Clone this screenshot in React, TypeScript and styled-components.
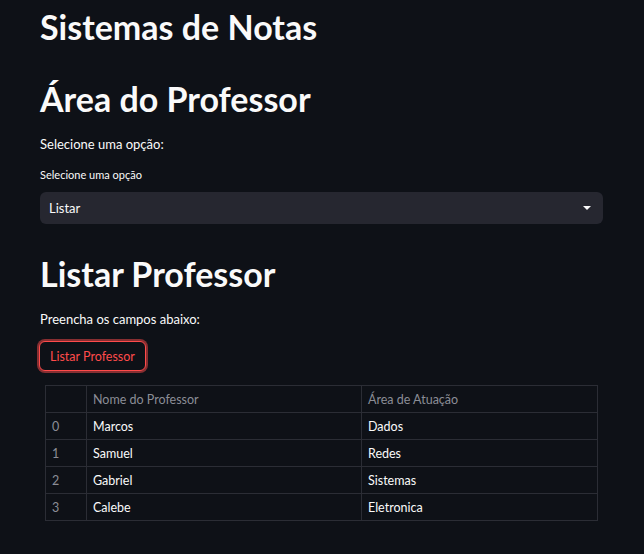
import React from "react";
import styled, { createGlobalStyle } from "styled-components";

const Global = createGlobalStyle`
  html, body { margin: 0; padding: 0; background: #0e1117; }
  body { font-family: Lato, "Noto Sans", sans-serif; color: #fafafa; }
  * { box-sizing: border-box; }
`;

const Page = styled.div`
  width: 644px;
  min-height: 554px;
  background: #0e1117;
  padding: 0 41px 0 40px;
  display: flex;
  flex-direction: column;
`;

const Title = styled.h1<{ $mt?: number; $mb?: number }>`
  margin: ${(p) => p.$mt ?? 0}px 0 ${(p) => p.$mb ?? 0}px;
  font-size: 34px;
  line-height: 42px;
  font-weight: 700;
  color: #fafafa;
`;

const Text = styled.p<{ $mt?: number }>`
  margin: ${(p) => p.$mt ?? 0}px 0 0;
  font-size: 13px;
  line-height: 20px;
  color: #fafafa;
`;

const Label = styled.div`
  margin-top: 13px;
  font-size: 11px;
  line-height: 16px;
  color: #fafafa;
`;

const Select = styled.div`
  margin-top: 9px;
  height: 32px;
  background: #262730;
  border-radius: 6px;
  display: flex;
  align-items: center;
  justify-content: space-between;
  padding: 0 11px 0 9px;
  font-size: 13px;
`;

const Button = styled.button`
  align-self: flex-start;
  margin-top: 12px;
  margin-left: -1px;
  height: 30px;
  padding: 0 10px;
  background: #0e1117;
  border: 1px solid #ff4b4b;
  border-radius: 6px;
  color: #ff4b4b;
  font-family: inherit;
  font-size: 12.5px;
  box-shadow: 0 0 0 2px rgba(255, 75, 75, 0.5);
`;

const Table = styled.table`
  margin: 14px 5px 0 5px;
  border-collapse: collapse;
  font-size: 12.5px;
  table-layout: fixed;
  width: 553px;
`;

const Th = styled.th<{ $w?: number }>`
  width: ${(p) => (p.$w ? `${p.$w}px` : "auto")};
  border: 1px solid #2b2d35;
  height: 27px;
  padding: 0 6px;
  text-align: left;
  font-weight: 400;
  color: #8b8d96;
`;

const Td = styled.td<{ $idx?: boolean }>`
  border: 1px solid #2b2d35;
  height: 27px;
  padding: 0 6px;
  color: ${(p) => (p.$idx ? "#8b8d96" : "#fafafa")};
`;

const rows = [
  ["Marcos", "Dados"],
  ["Samuel", "Redes"],
  ["Gabriel", "Sistemas"],
  ["Calebe", "Eletronica"],
];

export default function App() {
  return (
    <Page>
      <Global />
      <Title $mt={6}>Sistemas de Notas</Title>
      <Title $mt={30}>Área do Professor</Title>
      <Text $mt={14}>Selecione uma opção:</Text>
      <Label>Selecione uma opção</Label>
      <Select>
        <span>Listar</span>
        <svg width="10" height="6" viewBox="0 0 10 6">
          <path d="M1 1h8L5 5z" fill="#fafafa" />
        </svg>
      </Select>
      <Title $mt={29}>Listar Professor</Title>
      <Text $mt={14}>Preencha os campos abaixo:</Text>
      <Button>Listar Professor</Button>
      <Table>
        <thead>
          <tr>
            <Th $w={41}></Th>
            <Th $w={275}>Nome do Professor</Th>
            <Th>Área de Atuação</Th>
          </tr>
        </thead>
        <tbody>
          {rows.map((r, i) => (
            <tr key={i}>
              <Td $idx>{i}</Td>
              <Td>{r[0]}</Td>
              <Td>{r[1]}</Td>
            </tr>
          ))}
        </tbody>
      </Table>
    </Page>
  );
}
